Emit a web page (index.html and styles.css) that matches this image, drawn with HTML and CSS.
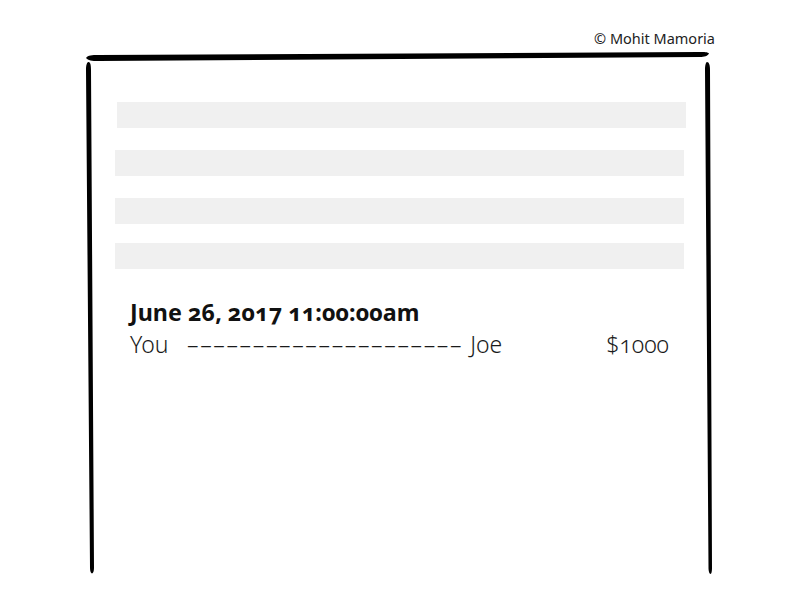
FILE: index.html
```html
<!DOCTYPE html>
<html lang="en">
<head>
<meta charset="utf-8">
<title>Transaction sketch</title>
<link rel="stylesheet" href="styles.css">
</head>
<body>
<div class="page">
  <div class="credit">© Mohit Mamoria</div>
  <div class="sheet">
    <div class="bar bar-first"></div>
    <div class="bar bar-second"></div>
    <div class="bar bar-third"></div>
    <div class="bar bar-fourth"></div>
    <div class="entry">
      <div class="date">June 26, 2017 11:00:00am</div>
      <div class="line">
        <span class="from">You</span>
        <span class="dashes">–––––––––––––––––––––</span>
        <span class="to">Joe</span>
        <span class="amount">$1000</span>
      </div>
    </div>
  </div>
  <svg class="frame" width="800" height="600" viewBox="0 0 800 600" aria-hidden="true">
    <path d="M86,58 C88,55 92,55 98,55 L700,52 C704,52 708,52 709,53.5 C708,56 704,57 700,57 L98,61 C92,61 88,60.5 86,58 Z" />
    <path d="M88.5,62 C90,62 91,64 91,70 L94,568 C94,571 93,573.5 92,573.5 C91,573.5 90,571 90,568 L86,70 C86,65 87,62 88.5,62 Z" />
    <path d="M707,62 C709,62 710,65 710,70 L712,568 C712,571 711.5,574 710.5,574 C709.5,574 708.5,571 708.5,568 L705,70 C705,65 706,62 707,62 Z" />
  </svg>
</div>
</body>
</html>
```

FILE: styles.css
```css
* { box-sizing: border-box; }

html, body {
  margin: 0;
  padding: 0;
  background: #ffffff;
}

.page {
  position: relative;
  width: 800px;
  height: 600px;
  overflow: hidden;
  font-family: "Noto Sans", Lato, sans-serif;
  color: #111111;
}

.credit {
  padding-top: 29px;
  padding-right: 85px;
  text-align: right;
  font-family: "Noto Sans", sans-serif;
  font-size: 14.5px;
  line-height: 18px;
  color: #222222;
}

.sheet {
  margin-top: 55px;
  padding-left: 115px;
  width: 800px;
}

.bar {
  height: 26px;
  width: 569px;
  background: #f0f0f0;
}

.bar-first { margin-left: 2px; }
.bar-second { margin-top: 22px; }
.bar-third { margin-top: 22px; }
.bar-fourth { margin-top: 19px; }

.entry {
  margin-top: 27px;
  padding-left: 15px;
  width: 554px;
}

.date {
  font-family: "Noto Sans", sans-serif;
  font-weight: 700;
  font-size: 23.3px;
  line-height: 32px;
  font-variant-numeric: oldstyle-nums;
  color: #111111;
}

.line {
  display: flex;
  align-items: baseline;
  font-family: "Noto Sans", sans-serif;
  font-weight: 300;
  font-size: 23px;
  line-height: 32px;
  font-variant-numeric: oldstyle-nums;
  color: #1a1a1a;
}

.from { width: 57px; }
.dashes { letter-spacing: 1.65px; }
.to { margin-left: 7px; }
.amount { margin-left: auto; }

.frame {
  position: absolute;
  left: 0;
  top: 0;
  pointer-events: none;
}

.frame path { fill: #000000; }
```
